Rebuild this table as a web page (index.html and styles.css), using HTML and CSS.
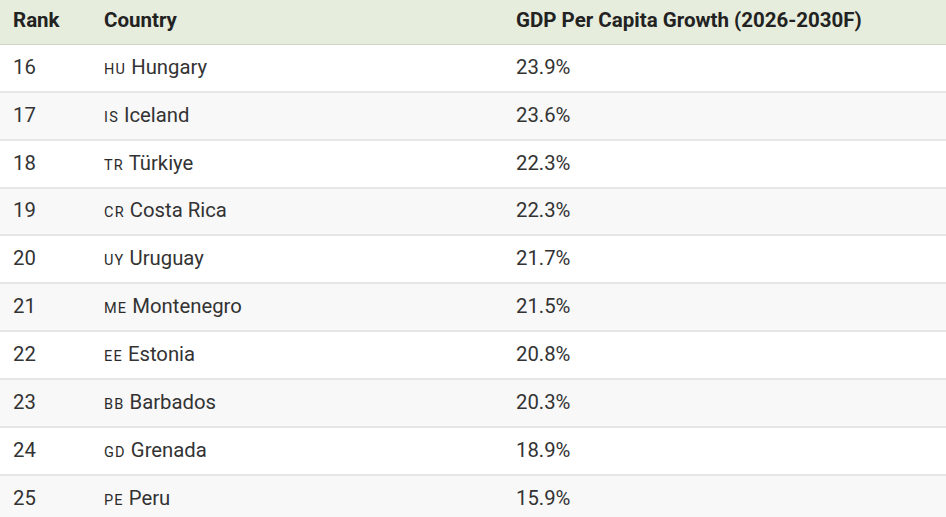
FILE: index.html
```html
<!DOCTYPE html>
<html>
<head>
<meta charset="utf-8">
<link rel="stylesheet" href="styles.css">
</head>
<body>
<table class="gdp">
  <thead>
    <tr><th class="rank">Rank</th><th class="country">Country</th><th>GDP Per Capita Growth (2026-2030F)</th></tr>
  </thead>
  <tbody>
    <tr><td>16</td><td><span class="code">HU</span> Hungary</td><td>23.9%</td></tr>
    <tr><td>17</td><td><span class="code">IS</span> Iceland</td><td>23.6%</td></tr>
    <tr><td>18</td><td><span class="code">TR</span> Türkiye</td><td>22.3%</td></tr>
    <tr><td>19</td><td><span class="code">CR</span> Costa Rica</td><td>22.3%</td></tr>
    <tr><td>20</td><td><span class="code">UY</span> Uruguay</td><td>21.7%</td></tr>
    <tr><td>21</td><td><span class="code">ME</span> Montenegro</td><td>21.5%</td></tr>
    <tr><td>22</td><td><span class="code">EE</span> Estonia</td><td>20.8%</td></tr>
    <tr><td>23</td><td><span class="code">BB</span> Barbados</td><td>20.3%</td></tr>
    <tr><td>24</td><td><span class="code">GD</span> Grenada</td><td>18.9%</td></tr>
    <tr><td>25</td><td><span class="code">PE</span> Peru</td><td>15.9%</td></tr>
  </tbody>
</table>
</body>
</html>
```
FILE: styles.css
```css
html, body { margin: 0; padding: 0; background: #fff; }
body { font-family: Roboto, "Liberation Sans", sans-serif; color: #333; overflow: hidden; }
.gdp { width: 946px; border-collapse: collapse; table-layout: fixed; }
.gdp th, .gdp td { text-align: left; padding: 0 0 0 13px; vertical-align: middle; box-sizing: border-box; }
.gdp th { font-size: 20.5px; font-weight: 700; color: #222; height: 44px; padding-bottom: 4px; background: #e6eddc; border-bottom: 1px solid #cfd6c6; }
.gdp th.rank { width: 91px; }
.gdp th.country { width: 412px; }
.gdp td { font-size: 20.3px; height: 47.85px; padding-bottom: 2px; border-bottom: 2px solid #e6e6e6; }
.gdp tbody tr:nth-child(even) td { background: #f8f8f8; }
.code { font-size: 14.5px; letter-spacing: 1.2px; color: #2a2a2a; }
```
